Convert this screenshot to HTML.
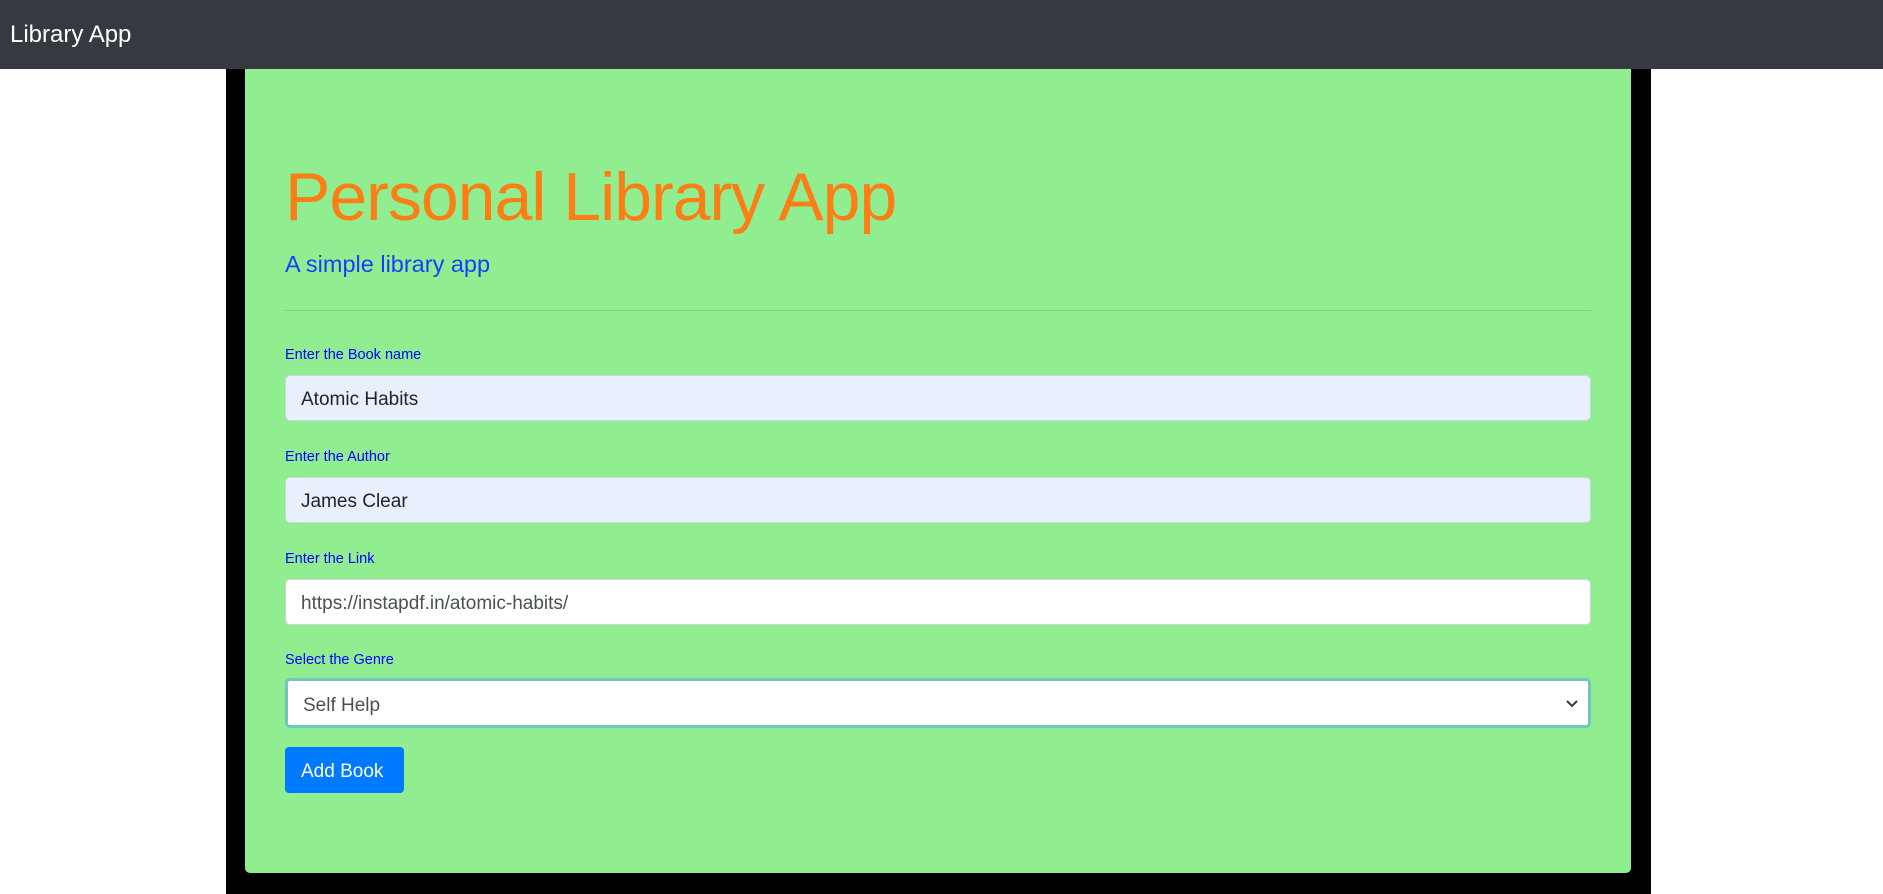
<!DOCTYPE html>
<html><head><style>
*{box-sizing:border-box;margin:0;padding:0}
body{width:1883px;height:894px;background:#fff;font-family:"Liberation Sans",sans-serif;position:relative;overflow:hidden}
.nav{position:absolute;left:0;top:0;width:1883px;height:69px;background:#343a40;color:#fff;font-size:24px;padding:21px 0 0 10px}
.box{position:absolute;left:226px;top:69px;width:1425px;height:825px;background:#000}
.card{position:absolute;left:245px;top:69px;width:1386px;height:804px;background:#90ee90;border-radius:0 0 5px 5px}
.abs{position:absolute}
h1{position:absolute;left:285px;top:158px;font-weight:300;font-size:68px;color:#fd7e14;font-family:"Liberation Sans",sans-serif;letter-spacing:-1px}
.sub{left:285px;top:251px;font-size:23.5px;color:#1a3cff;font-weight:300}
.hr{left:285px;top:310px;width:1306px;height:1px;background:#7fd17f}
.lbl{left:285px;font-size:14.5px;color:#0000ff}
.in{left:285px;width:1306px;height:46px;border:1px solid #ced4da;border-radius:5px;font-size:19px;padding:13px 15px 0;color:#212529}
.btn{left:285px;top:747px;width:119px;height:46px;background:#007bff;border-radius:4px;color:#fff;font-size:19px;padding:14px 0 0 16px}
</style></head><body>
<div class="nav">Library App</div>
<div class="box"></div>
<div class="card"></div>
<h1>Personal Library App</h1>
<div class="abs sub">A simple library app</div>
<div class="abs hr"></div>
<div class="abs lbl" style="top:347px">Enter the Book name</div>
<div class="abs in" style="top:375px;background:#e8f0fe">Atomic Habits</div>
<div class="abs lbl" style="top:449px">Enter the Author</div>
<div class="abs in" style="top:477px;background:#e8f0fe">James Clear</div>
<div class="abs lbl" style="top:551px">Enter the Link</div>
<div class="abs in" style="top:579px;background:#fff;color:#495057">https://instapdf.in/atomic-habits/</div>
<div class="abs lbl" style="top:652px">Select the Genre</div>
<div class="abs in" style="top:678px;height:50px;background:#fff;color:#495057;border:3px solid #6cc8c0;padding-top:14px">Self Help
<svg style="position:absolute;right:10px;top:18px" width="12" height="10" viewBox="0 0 12 10"><path d="M1 2l5 5 5-5" stroke="#343a40" stroke-width="2" fill="none"/></svg></div>
<div class="abs btn">Add Book</div>
</body></html>
